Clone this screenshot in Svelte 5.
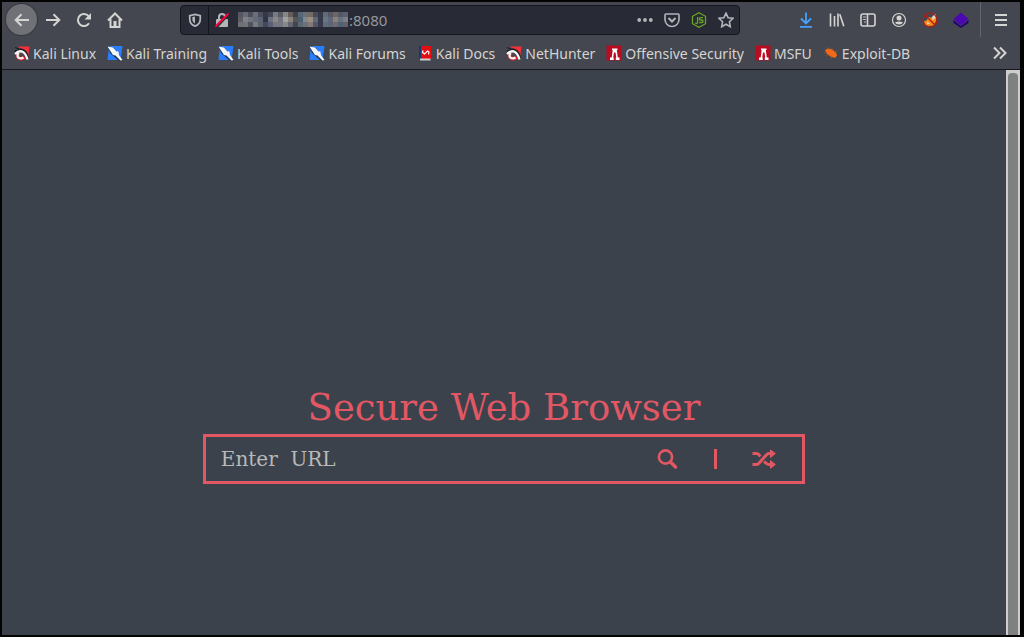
<script lang="ts">
  type Bookmark = { label: string; icon: string };

  const bookmarks: Bookmark[] = [
    { label: 'Kali Linux', icon: 'dragon' },
    { label: 'Kali Training', icon: 'knife' },
    { label: 'Kali Tools', icon: 'knife' },
    { label: 'Kali Forums', icon: 'knife' },
    { label: 'Kali Docs', icon: 'book' },
    { label: 'NetHunter', icon: 'dragon' },
    { label: 'Offensive Security', icon: 'offsec' },
    { label: 'MSFU', icon: 'offsec' },
    { label: 'Exploit-DB', icon: 'bug' }
  ];

  // the host part of the address is pixelated, one colour per cell
  const mosaic = [
    '565861 686b73 4c505b 6d6e76 4b4f5c 34384a 444854 747b83 5c5b64 858687 645d5b 403f47 586878 6c7078 766a65 494b57 34394a 626b77 555966 6f6560 535966 5d6068',
    '5d5d63 7d8188 6f7480 646a76 5b6473 303447 6c7180 8a8786 70727e a1a19f 87827e 5a5553 496073 82878c 9b8d82 606777 35394a 667586 60667a 8d8079 647180 7e7c80',
    '707074 70747b 4d535f 777a80 59616f 484958 55617a 787678 747781 85878b 64676f 414652 5e6872 6c717d 817a77 515767 35394a 5f6b7e 606576 6f6a71 536071 626167'
  ].map((row) => row.split(' '));

  let address = $state(':8080');
  let url = $state('');
</script>

<div class="window">
  <nav class="toolbar" aria-label="Navigation">
    <button type="button" class="tool back" aria-label="Back">
      <svg viewBox="0 0 16 16"><path class="line" d="M15 8H2M7.500 2.200 1.700 8l5.800 5.800" /></svg>
    </button>
    <button type="button" class="tool" aria-label="Forward">
      <svg viewBox="0 0 16 16"><path class="line" d="M1 8h13M8.500 2.200 14.300 8l-5.800 5.800" /></svg>
    </button>
    <button type="button" class="tool" aria-label="Reload">
      <svg viewBox="0 0 16 16">
        <path class="line" d="M13 11.200A6 6 0 1 1 12.600 4.200" />
        <path class="fill" d="M15 1v6.500H8.500z" />
      </svg>
    </button>
    <button type="button" class="tool" aria-label="Home">
      <svg viewBox="0 0 16 16">
        <path class="line" d="M1 8.500 8 1.500l7 7M3.500 7v8h9V7" />
        <path class="fill" d="M6.500 9h3v6h-3z" />
      </svg>
    </button>

    <div class="location">
      <button type="button" class="inner" aria-label="Tracking protection">
        <svg class="small" viewBox="0 0 16 16">
          <path class="line" d="M8 1.500 14 3v4c0 4-2.500 6.500-6 8-3.500-1.500-6-4-6-8V3z" />
          <path class="fill" d="M8 4v8C6 10.800 5 9.500 5 7V4.700z" />
        </svg>
      </button>
      <button type="button" class="inner lock" aria-label="Connection is not secure">
        <svg viewBox="0 0 16 16">
          <path class="line" d="M5 8V5a3 3 0 0 1 6 0v3" />
          <path class="fill" d="M3 7h10q1 0 1 1v6q0 1-1 1H3q-1 0-1-1V8q0-1 1-1z" />
          <path d="M2.500 15.500 15 2" stroke="#282a36" stroke-width="2" />
          <path d="M1.500 14.500 14.500 1.500" stroke="#ff0039" stroke-width="1.800" />
        </svg>
      </button>
      <svg class="mosaic" viewBox="0 0 110 15" shape-rendering="crispEdges" aria-hidden="true">
        {#each mosaic as row, y}
          {#each row as colour, x}
            <rect x={x * 5} y={y * 5} width="5" height="5" fill="#{colour}" />
          {/each}
        {/each}
      </svg>
      <input class="address" type="text" aria-label="Address" bind:value={address} />
      <button type="button" class="inner" aria-label="Page actions">
        <svg viewBox="0 0 16 16">
          <circle class="fill" cx="2.200" cy="8" r="1.900" />
          <circle class="fill" cx="8" cy="8" r="1.900" />
          <circle class="fill" cx="13.800" cy="8" r="1.900" />
        </svg>
      </button>
      <button type="button" class="inner" aria-label="Save to Pocket">
        <svg viewBox="0 0 16 16">
          <path class="line thin" d="M2 2h12q1 0 1 1v4.500a7 7 0 0 1-14 0V3q0-1 1-1z" />
          <path class="line" d="M4.500 6 8 9.500 11.500 6" />
        </svg>
      </button>
      <button type="button" class="inner" aria-label="JavaScript">
        <svg viewBox="0 0 16 16" fill="none" stroke="#68a51f" stroke-width="1.300">
          <path d="M8 .700 14.500 4.300v7.400L8 15.300 1.500 11.700V4.300z" />
          <path d="M6.600 5v5.200q0 1.300-1.200 1.300-.900 0-1.200-.700M12 5.700H9.500q-1.200 0-1.200 1.200 0 1.100 1.200 1.100h1.300q1.300 0 1.300 1.300 0 1.200-1.300 1.200H8.200" />
        </svg>
      </button>
      <button type="button" class="inner" aria-label="Bookmark this page">
        <svg viewBox="0 0 16 16">
          <path class="line thin" d="m8 1.200 2.100 4.500 4.900.600-3.600 3.400.9 5L8 12.200l-4.300 2.500.9-5L1 6.300l4.900-.600z" />
        </svg>
      </button>
    </div>

    <button type="button" class="tool" aria-label="Downloads">
      <svg viewBox="0 0 16 16" fill="none" stroke="#45a1ff" stroke-width="1.800">
        <path d="M8 .500v10.500M3 6.500l5 5 5-5M2 14.800h12" />
      </svg>
    </button>
    <button type="button" class="tool" aria-label="Library">
      <svg viewBox="0 0 16 16"><path class="line thin" d="M1.500 1.500v13M5.500 4v10.500M9 1.500v13M10.800 2.200l4 12" /></svg>
    </button>
    <button type="button" class="tool" aria-label="Sidebars">
      <svg viewBox="0 0 16 16">
        <rect class="line thin" x="1" y="2" width="14" height="12" rx="2" />
        <path class="line thin" d="M7.500 2v12" />
        <path d="M3 5h3M3 7.500h3M4 10h2" stroke="#b9babd" />
      </svg>
    </button>
    <button type="button" class="tool" aria-label="Account">
      <svg viewBox="0 0 16 16">
        <circle cx="8" cy="8" r="6.500" fill="none" stroke="#d7d7d5" stroke-width="1.200" />
        <circle class="fill" cx="8" cy="6" r="2.500" />
        <path class="fill" d="M4 10.200q4-1.500 8 0Q11 12.500 8 12.500t-4-2.300z" />
      </svg>
    </button>
    <button type="button" class="tool" aria-label="Proxy disabled">
      <svg viewBox="0 0 16 16">
        <path d="M2 9.500 5 8l1.500-3L10 6l4-4v7l-2.500 4.500L7 14l-4-1z" fill="#f08b18" />
        <path d="m9.500 5.500 3.700-3.700.3 3.700-2.500 3zM5 9.500l3 2-3 1z" fill="#e5d4b5" />
        <circle cx="8" cy="8" r="7" fill="none" stroke="#bd1717" stroke-width="1.200" />
        <path d="m3 3 10 10" stroke="#bd1717" stroke-width="1.200" />
      </svg>
    </button>
    <button type="button" class="tool" aria-label="Containers">
      <svg viewBox="0 0 16 16">
        <path d="M.500 8 8 14.200 15.500 8v3L8 16 .500 11z" fill="#21036f" />
        <path d="M8 .500 15.500 7 8 13.500.500 7z" fill="#4b07b0" />
      </svg>
    </button>
    <button type="button" class="tool menu" aria-label="Open menu">
      <svg viewBox="0 0 16 16"><path class="line" d="M2 3h12M2 8h12M2 13h12" /></svg>
    </button>
  </nav>

  <div class="bookmarks">
    {#each bookmarks as b (b.label)}
      <a href="#top">
        <svg viewBox="0 0 16 16" aria-hidden="true">
          {#if b.icon === 'dragon'}
            <path d="M3.500 1.500h12L14 13 9.500 5z" fill="#f5303a" />
            <path d="M1 2.500 5 4M.500 5.500 4 6" stroke="#191c22" />
            <path d="M.500 8.500Q5 2.500 9.500 5t4.500 9" fill="none" stroke="#1c1e25" stroke-width="1.500" />
            <path d="M5 8q-2.500 4 .8 5.500 3 .700 5-1.500" fill="none" stroke="#e3202c" stroke-width="3.600" />
            <path d="M1 9Q5 5 8.500 6.800T13.500 14.500M4.500 8q-2.200 3.500.5 5 2.500.800 4.500-.500" fill="none" stroke="#f6f6f6" stroke-width="2.300" />
          {:else if b.icon === 'knife'}
            <path d="M2 1h13.500l-2 14H.500z" fill="#287eff" />
            <path d="m0 .500 7 2.500 8 11.500-3 1.500L3 8z" fill="#24364d" />
            <path d="m.500 1.500 5.500 1 3.500 4 1.800-.300.7 3.800 3.500 5-2 .500-5-5-2.500-.500-3-4.500z" fill="#f4f7fa" />
          {:else if b.icon === 'book'}
            <path d="M2 1h3v13H2z" fill="#183a72" />
            <path d="M4 1h10v13H4z" fill="#e40d12" />
            <path d="M3 13.500h10.500v2H3z" fill="#cfcfd0" />
            <path d="m6 5.500-.5 2 2 1.500 3-3 1.500 1-.5 2.500" fill="none" stroke="#fff" stroke-width="1.200" />
          {:else if b.icon === 'offsec'}
            <path d="M.500.500h15v15H.500z" fill="#b80c20" />
            <path d="M6 3.500h5.500V5h-.700l1 7.500h1.700V15H9.800v-2.500h.5L9.500 7.500H8l-.8 5h.5V15H4v-2.500h1.700l1-7.500H6z" fill="#fff" />
          {:else}
            <path d="m2 5 3-1.500 4 .8 4 3.200 1 3-2 2.500-4.500-1.500L4 9z" fill="#f36b16" />
            <path d="m5 2 1 4M9 2.500v4M1 8l4-.500M3 11l4-2M14 5l-3 3M8 14l1-4" stroke="#b5592a" stroke-width=".500" />
          {/if}
        </svg>
        <span>{b.label}</span>
      </a>
    {/each}
    <button type="button" class="more" aria-label="More bookmarks">
      <svg viewBox="0 0 16 16"><path class="line" d="m2 2.500 5.500 5.500L2 13.500M8 2.500l5.500 5.500L8 13.500" /></svg>
    </button>
  </div>

  <div class="viewport">
    <main>
      <form class="browser" onsubmit={(e) => e.preventDefault()}>
        <h1><label for="url">Secure Web Browser</label></h1>
        <div class="search">
          <input id="url" type="text" placeholder="Enter&nbsp; URL" bind:value={url} />
          <button type="submit" aria-label="Search">
            <svg viewBox="0 0 24 24" fill="none" stroke="currentColor">
              <circle cx="10.500" cy="10" r="6.600" stroke-width="2.600" />
              <path d="m15.500 15 5 5" stroke-width="3.400" stroke-linecap="round" />
            </svg>
          </button>
          <span class="divider"></span>
          <button type="button" aria-label="Random page">
            <svg viewBox="0 0 24 24" fill="none" stroke="currentColor" stroke-width="3">
              <path d="M.500 6.500h4q1.500 0 2.500 1.300l1.300 1.700M.500 17.500h4q1.500 0 2.500-1.300L14.500 7.800q1-1.300 2.500-1.300h2M12 14.500l2.500 2q1 1 2.500 1h2" />
              <path d="M18.500 3 23.300 6.500l-4.800 4zM18.500 13.500l4.800 4-4.800 3.800z" fill="currentColor" stroke-width="1" stroke-linejoin="round" />
            </svg>
          </button>
        </div>
      </form>
    </main>
    <div class="scrollbar"><div class="thumb"></div></div>
  </div>
</div>

<style>
  :global(body) {
    background: #000;
  }

  .window {
    box-sizing: border-box;
    min-height: 100vh;
    display: flex;
    flex-direction: column;
    border: 2px solid #030304;
    border-right-width: 4px;
    background: #44474f;
    font-family: 'Noto Sans', sans-serif;
    font-size: 14px;
    color: #d4d4d2;
  }

  svg {
    display: block;
    width: 16px;
    height: 16px;
    flex: none;
  }
  .line {
    fill: none;
    stroke: currentColor;
    stroke-width: 2;
  }
  .thin {
    stroke-width: 1.6;
  }
  .fill {
    fill: currentColor;
  }

  button {
    display: flex;
    align-items: center;
    justify-content: center;
    padding: 0;
    border: none;
    background: none;
    color: inherit;
    cursor: pointer;
  }

  .toolbar {
    display: flex;
    align-items: center;
    height: 35px;
    padding-left: 4px;
  }
  .tool {
    width: 31px;
    height: 31px;
  }
  .back {
    border-radius: 50%;
    background: #6f7176;
    box-shadow: 0 0 0 1px #36383f;
  }
  .menu {
    width: 40px;
    height: 35px;
    margin-left: 4px;
    border-left: 1px solid #64666d;
  }

  .location {
    box-sizing: border-box;
    display: flex;
    flex: 1;
    align-items: center;
    height: 30px;
    min-width: 0;
    margin: 0 50px;
    border: 1px solid #15161d;
    border-radius: 4px;
    background: #282a36;
    color: #b4b5b9;
  }
  .inner {
    width: 27px;
    height: 28px;
  }
  .inner .small {
    width: 14px;
    height: 14px;
  }
  .lock {
    border-left: 1px solid #15161d;
  }
  .mosaic {
    width: 110px;
    height: 15px;
    margin: 0 1px 0 3px;
  }
  .address {
    flex: 1;
    min-width: 0;
    padding: 0;
    border: none;
    outline: none;
    background: none;
    color: #96979c;
    font: inherit;
    font-size: 15px;
  }

  .bookmarks {
    display: flex;
    align-items: center;
    gap: 11px;
    height: 32px;
    padding: 0 12px;
    border-bottom: 1px solid #17181f;
    white-space: nowrap;
  }
  .bookmarks a {
    display: flex;
    align-items: center;
    gap: 3px;
    color: inherit;
    text-decoration: none;
  }
  .more {
    margin-left: auto;
  }

  .viewport {
    display: flex;
    flex: 1;
    background: #3b424c;
  }
  main {
    flex: 1;
    padding-top: 50vh;
  }
  .scrollbar {
    width: 10px;
    padding: 3px 2px 0;
    background: #cecdcc;
  }
  .thumb {
    height: 100%;
    border-radius: 4px 4px 0 0;
    background: #7d8281;
  }

  .browser {
    width: 60%;
    margin: 0 auto;
    color: #e15864;
    font-family: 'DejaVu Serif', serif;
  }
  h1 {
    margin: 0 0 8px;
    font-size: 37px;
    font-weight: 400;
    line-height: 37px;
    text-align: center;
    white-space: nowrap;
  }
  .search {
    display: flex;
    align-items: center;
    gap: 24px;
    height: 44px;
    padding: 0 26px 0 15px;
    border: 3px solid #e15864;
  }
  .search input {
    flex: 1;
    min-width: 0;
    padding: 0;
    border: none;
    outline: none;
    background: none;
    color: #b9b9b7;
    font: inherit;
    font-size: 20px;
  }
  .search input::placeholder {
    color: #b9b9b7;
    opacity: 1;
  }
  .search svg {
    width: 24px;
    height: 24px;
  }
  .divider {
    width: 3px;
    height: 20px;
    margin: 0 11px;
    background: #e15864;
  }
</style>
